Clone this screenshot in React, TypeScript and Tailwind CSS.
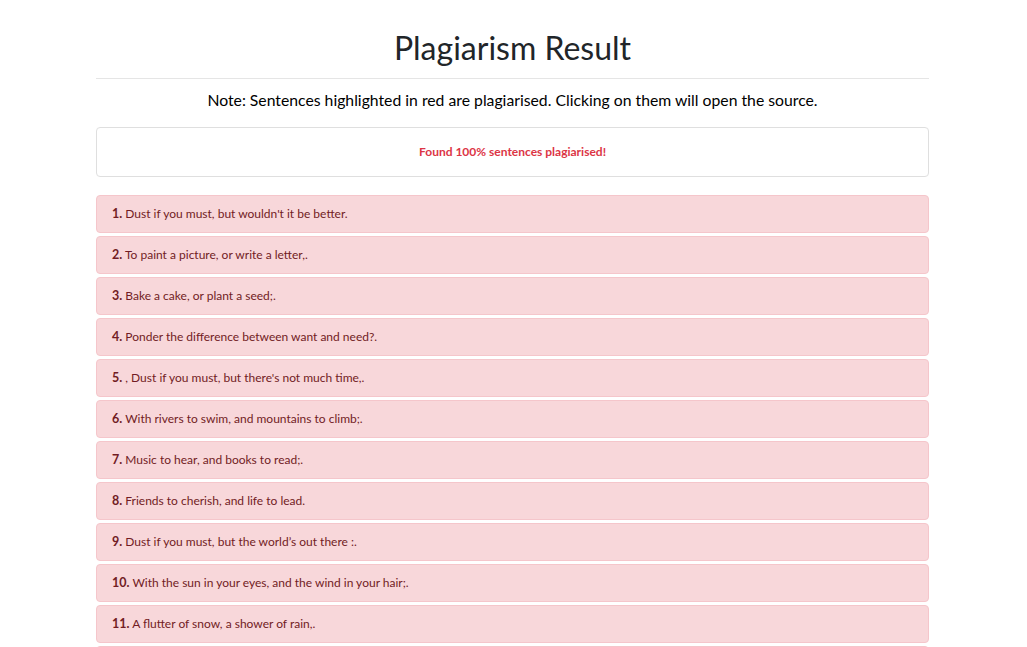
const sentences = [
  "Dust if you must, but wouldn't it be better.",
  "To paint a picture, or write a letter,.",
  "Bake a cake, or plant a seed;.",
  "Ponder the difference between want and need?.",
  ", Dust if you must, but there's not much time,.",
  "With rivers to swim, and mountains to climb;.",
  "Music to hear, and books to read;.",
  "Friends to cherish, and life to lead.",
  "Dust if you must, but the world\u2019s out there :.",
  "With the sun in your eyes, and the wind in your hair;.",
  "A flutter of snow, a shower of rain,.",
  "This day will not come round again.",
];

export default function App() {
  return (
    <div className="min-h-screen bg-white font-['Lato',sans-serif] text-[#212529]">
      <div className="ml-[96px] w-[833px] pt-[27px]">
        <h1 className="text-center text-[32px] leading-[42px] font-normal">
          Plagiarism Result
        </h1>
        <hr className="mt-[9px] border-t border-[#e5e5e5]" />
        <p className="mt-[11px] text-center text-[15.75px] leading-[20px] text-[#000]">
          Note: Sentences highlighted in red are plagiarised. Clicking on them will open the source.
        </p>

        <div className="mt-[17px] rounded border border-[#dfdfdf] h-[50px] flex items-center justify-center">
          <span className="text-[12px] font-bold text-[#dc3545]">
            Found 100% sentences plagiarised!
          </span>
        </div>

        <div className="mt-[18px] flex flex-col gap-[3px]">
          {sentences.map((s, i) => (
            <div
              key={i}
              className="h-[38px] flex items-center rounded border border-[#f5c6cb] bg-[#f8d7da] px-[15px] text-[12px] text-[#721c24] cursor-pointer"
            >
              <span>
                <b className="text-[12.5px]">{i + 1}.</b> {s}
              </span>
            </div>
          ))}
        </div>
      </div>
    </div>
  );
}
